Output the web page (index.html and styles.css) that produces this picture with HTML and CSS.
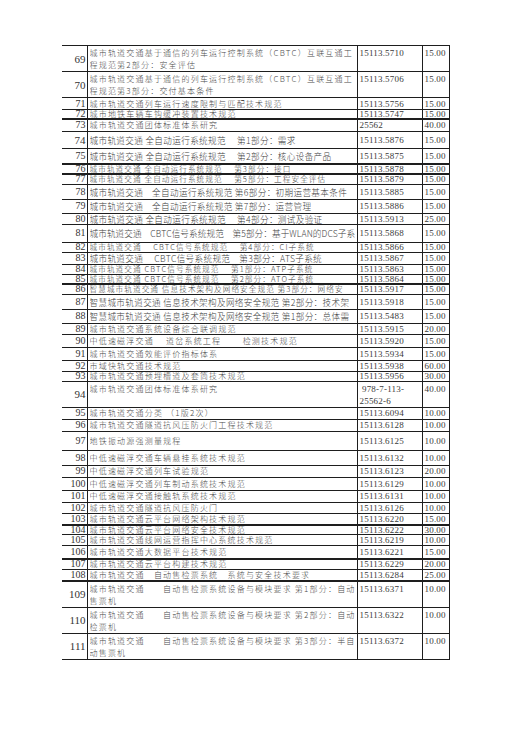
FILE: index.html
```html
<!DOCTYPE html>
<html lang="zh-CN">
<head>
<meta charset="utf-8">
<title>城市轨道交通标准目录</title>
<link rel="stylesheet" href="styles.css">
</head>
<body>
<table class="list">
<colgroup><col class="c-no"><col class="c-title"><col class="c-code"><col class="c-price"></colgroup>
<tr class="r27 two"><td class="no big">69</td><td class="title sp"><div class="clip">城市轨道交通基于通信的列车运行控制系统（CBTC）互联互通工<br>程规范第2部分：安全评估</div></td><td class="code">15113.5710</td><td class="price">15.00</td></tr>
<tr class="r21 two"><td class="no big">70</td><td class="title sp"><div class="clip">城市轨道交通基于通信的列车运行控制系统（CBTC）互联互通工<br>程规范第3部分：交付基本条件</div></td><td class="code">15113.5706</td><td class="price">15.00</td></tr>
<tr class="r13"><td class="no">71</td><td class="title sp"><div class="clip">城市轨道交通列车运行速度限制与匹配技术规范</div></td><td class="code">15113.5756</td><td class="price">15.00</td></tr>
<tr class="r10 thick"><td class="no">72</td><td class="title sp"><div class="clip">城市地铁车辆车钩缓冲装置技术规范</div></td><td class="code">15113.5747</td><td class="price">15.00</td></tr>
<tr class="r13"><td class="no">73</td><td class="title sp"><div class="clip">城市轨道交通团体标准体系研究</div></td><td class="code">25562</td><td class="price">40.00</td></tr>
<tr class="r18"><td class="no big">74</td><td class="title"><div class="clip">城市轨道交通 全自动运行系统规范　 第1部分：需求</div></td><td class="code">15113.5876</td><td class="price">15.00</td></tr>
<tr class="r17 thick"><td class="no">75</td><td class="title"><div class="clip">城市轨道交通 全自动运行系统规范　 第2部分：核心设备产品</div></td><td class="code">15113.5875</td><td class="price">15.00</td></tr>
<tr class="r11 thick"><td class="no">76</td><td class="title sm"><div class="clip">城市轨道交通 全自动运行系统规范　 第3部分：接口</div></td><td class="code">15113.5878</td><td class="price">15.00</td></tr>
<tr class="r11"><td class="no">77</td><td class="title sm"><div class="clip">城市轨道交通 全自动运行系统规范　 第5部分：工程安全评估</div></td><td class="code">15113.5879</td><td class="price">15.00</td></tr>
<tr class="r16"><td class="no">78</td><td class="title"><div class="clip">城市轨道交通　全自动运行系统规范 第6部分：初期运营基本条件</div></td><td class="code">15113.5885</td><td class="price">15.00</td></tr>
<tr class="r15"><td class="no">79</td><td class="title"><div class="clip">城市轨道交通　全自动运行系统规范 第7部分：运营管理</div></td><td class="code">15113.5886</td><td class="price">15.00</td></tr>
<tr class="r12"><td class="no">80</td><td class="title"><div class="clip">城市轨道交通 全自动运行系统规范　 第4部分：测试及验证</div></td><td class="code">15113.5913</td><td class="price">25.00</td></tr>
<tr class="r19"><td class="no">81</td><td class="title tight"><div class="clip">城市轨道交通　CBTC信号系统规范　第5部分：基于WLAN的DCS子系</div></td><td class="code">15113.5868</td><td class="price">15.00</td></tr>
<tr class="r11"><td class="no">82</td><td class="title sm"><div class="clip">城市轨道交通　 CBTC信号系统规范　 第4部分：CI子系统</div></td><td class="code">15113.5866</td><td class="price">15.00</td></tr>
<tr class="r13"><td class="no">83</td><td class="title"><div class="clip">城市轨道交通　 CBTC信号系统规范　第3部分：ATS子系统</div></td><td class="code">15113.5867</td><td class="price">15.00</td></tr>
<tr class="r11"><td class="no">84</td><td class="title sm"><div class="clip">城市轨道交通 CBTC信号系统规范　 第1部分：ATP子系统</div></td><td class="code">15113.5863</td><td class="price">15.00</td></tr>
<tr class="r11 thick"><td class="no">85</td><td class="title sm"><div class="clip">城市轨道交通 CBTC信号系统规范　 第2部分：ATO子系统</div></td><td class="code">15113.5864</td><td class="price">15.00</td></tr>
<tr class="r11"><td class="no">86</td><td class="title sm"><div class="clip">智慧城市轨道交通 信息技术架构及网络安全规范 第3部分：网络安</div></td><td class="code">15113.5917</td><td class="price">15.00</td></tr>
<tr class="r16"><td class="no">87</td><td class="title"><div class="clip">智慧城市轨道交通 信息技术架构及网络安全规范 第2部分：技术架</div></td><td class="code">15113.5918</td><td class="price">15.00</td></tr>
<tr class="r15"><td class="no">88</td><td class="title"><div class="clip">智慧城市轨道交通 信息技术架构及网络安全规范 第1部分：总体需</div></td><td class="code">15113.5483</td><td class="price">15.00</td></tr>
<tr class="r12"><td class="no">89</td><td class="title sp"><div class="clip">城市轨道交通系统设备综合联调规范</div></td><td class="code">15113.5915</td><td class="price">20.00</td></tr>
<tr class="r14"><td class="no">90</td><td class="title sp"><div class="clip">中低速磁浮交通　 道岔系统工程　　 检测技术规范</div></td><td class="code">15113.5920</td><td class="price">15.00</td></tr>
<tr class="r14"><td class="no">91</td><td class="title sp"><div class="clip">城市轨道交通效能评价指标体系</div></td><td class="code">15113.5934</td><td class="price">15.00</td></tr>
<tr class="r12"><td class="no">92</td><td class="title sp"><div class="clip">市域快轨交通技术规范</div></td><td class="code">15113.5938</td><td class="price">60.00</td></tr>
<tr class="r11"><td class="no">93</td><td class="title sp"><div class="clip">城市轨道交通预埋槽道及套筒技术规范</div></td><td class="code">15113.5956</td><td class="price">30.00</td></tr>
<tr class="r25 two"><td class="no big">94</td><td class="title sp"><div class="clip">城市轨道交通团体标准体系研究</div></td><td class="code"> 978-7-113-<br>25562-6</td><td class="price">40.00</td></tr>
<tr class="r13"><td class="no">95</td><td class="title sp"><div class="clip">城市轨道交通分类 （1版2次）</div></td><td class="code">15113.6094</td><td class="price">10.00</td></tr>
<tr class="r13"><td class="no">96</td><td class="title sp"><div class="clip">城市轨道交通隧道抗风压防火门工程技术规范</div></td><td class="code">15113.6128</td><td class="price">10.00</td></tr>
<tr class="r20"><td class="no">97</td><td class="title sp"><div class="clip">地铁振动源强测量规程</div></td><td class="code">15113.6125</td><td class="price">10.00</td></tr>
<tr class="r16"><td class="no">98</td><td class="title sp"><div class="clip">中低速磁浮交通车辆悬挂系统技术规范</div></td><td class="code">15113.6132</td><td class="price">10.00</td></tr>
<tr class="r13"><td class="no">99</td><td class="title sp"><div class="clip">中低速磁浮交通列车试验规范</div></td><td class="code">15113.6123</td><td class="price">20.00</td></tr>
<tr class="r14"><td class="no">100</td><td class="title sp"><div class="clip">中低速磁浮交通列车制动系统技术规范</div></td><td class="code">15113.6129</td><td class="price">10.00</td></tr>
<tr class="r13"><td class="no">101</td><td class="title sp"><div class="clip">中低速磁浮交通接触轨系统技术规范</div></td><td class="code">15113.6131</td><td class="price">10.00</td></tr>
<tr class="r12"><td class="no">102</td><td class="title sp"><div class="clip">城市轨道交通隧道抗风压防火门</div></td><td class="code">15113.6126</td><td class="price">10.00</td></tr>
<tr class="r13 thick"><td class="no">103</td><td class="title sp"><div class="clip">城市轨道交通云平台网络架构技术规范</div></td><td class="code">15113.6220</td><td class="price">15.00</td></tr>
<tr class="r10"><td class="no">104</td><td class="title sp"><div class="clip">城市轨道交通云平台网络安全技术规范</div></td><td class="code">15113.6222</td><td class="price">30.00</td></tr>
<tr class="r12"><td class="no">105</td><td class="title sp"><div class="clip">城市轨道交通线网运营指挥中心系统技术规范</div></td><td class="code">15113.6219</td><td class="price">10.00</td></tr>
<tr class="r14 thick"><td class="no">106</td><td class="title sp"><div class="clip">城市轨道交通大数据平台技术规范</div></td><td class="code">15113.6221</td><td class="price">15.00</td></tr>
<tr class="r12"><td class="no">107</td><td class="title sp"><div class="clip">城市轨道交通云平台构建技术规范</div></td><td class="code">15113.6229</td><td class="price">20.00</td></tr>
<tr class="r12 thick"><td class="no">108</td><td class="title sp"><div class="clip">城市轨道交通　自动售检票系统　系统与安全技术要求</div></td><td class="code">15113.6284</td><td class="price">25.00</td></tr>
<tr class="r25 two"><td class="no big">109</td><td class="title sp"><div class="clip">城市轨道交通　　自动售检票系统设备与模块要求 第1部分：自动<br>售票机</div></td><td class="code">15113.6371</td><td class="price">10.00</td></tr>
<tr class="r24 two"><td class="no big">110</td><td class="title sp"><div class="clip">城市轨道交通　　自动售检票系统设备与模块要求 第2部分：自动<br>检票机</div></td><td class="code">15113.6322</td><td class="price">10.00</td></tr>
<tr class="r23 two"><td class="no big">111</td><td class="title sp"><div class="clip">城市轨道交通　　自动售检票系统设备与模块要求 第3部分：半自<br>动售票机</div></td><td class="code">15113.6372</td><td class="price">10.00</td></tr>
</table>
</body>
</html>
```

FILE: styles.css
```css
html, body {
  margin: 0;
  padding: 0;
  background: #ffffff;
}

body {
  width: 520px;
  height: 735px;
  overflow: hidden;
}

.list {
  border-collapse: collapse;
  table-layout: fixed;
  width: 387px;
  margin: 45px 0 0 62px;
}

.c-no { width: 25px; }
.c-title { width: 270px; }
.c-code { width: 65px; }
.c-price { width: 27px; }

.list td {
  border: 1px solid #1e1e1e;
  padding: 0;
  vertical-align: middle;
  white-space: pre;
  line-height: 8px;
  color: #3a3a3a;
}

.list td.no {
  border-left: none;
  text-align: right;
  padding-right: 1px;
  font-family: "Liberation Serif", serif;
  font-size: 10px;
  color: #333;
}

.list td.no.big {
  font-size: 11px;
}

.list td.title {
  padding-left: 2px;
  font-family: "Noto Sans CJK SC", "Noto Sans", sans-serif;
  font-size: 8.6px;
  letter-spacing: 0.35px;
  font-weight: 300;
  color: #3c3c3c;
}

.list td.title.sm {
  font-size: 7.6px;
  letter-spacing: 1.1px;
}

.list td.title.tight {
  letter-spacing: 0.1px;
}

.clip {
  width: 266px;
  overflow: hidden;
  white-space: pre;
  padding: 3px 0;
  margin: -3px 0;
}

.list td.title.sp {
  font-size: 8px;
  letter-spacing: 1.2px;
  color: #4a4a4a;
}

.list td.code,
.list td.price {
  overflow: hidden;
  padding-left: 2px;
  font-family: "Liberation Serif", serif;
  font-size: 9px;
  letter-spacing: 0.2px;
}

.two td.title,
.two td.code,
.two td.price {
  vertical-align: top;
  line-height: 12px;
  padding-top: 1px;
}

.two .clip {
  padding: 0;
  margin: 0;
}

.thick td {
  border-bottom-width: 2px;
}

.r10 { height: 9px; }
.r11 { height: 10px; }
.r12 { height: 11px; }
.r13 { height: 12px; }
.r14 { height: 13px; }
.r15 { height: 14px; }
.r16 { height: 15px; }
.r17 { height: 16px; }
.r18 { height: 17px; }
.r19 { height: 18px; }
.r20 { height: 19px; }
.r21 { height: 20px; }
.r23 { height: 22px; }
.r24 { height: 23px; }
.r25 { height: 24px; }
.r27 { height: 26px; }
```
